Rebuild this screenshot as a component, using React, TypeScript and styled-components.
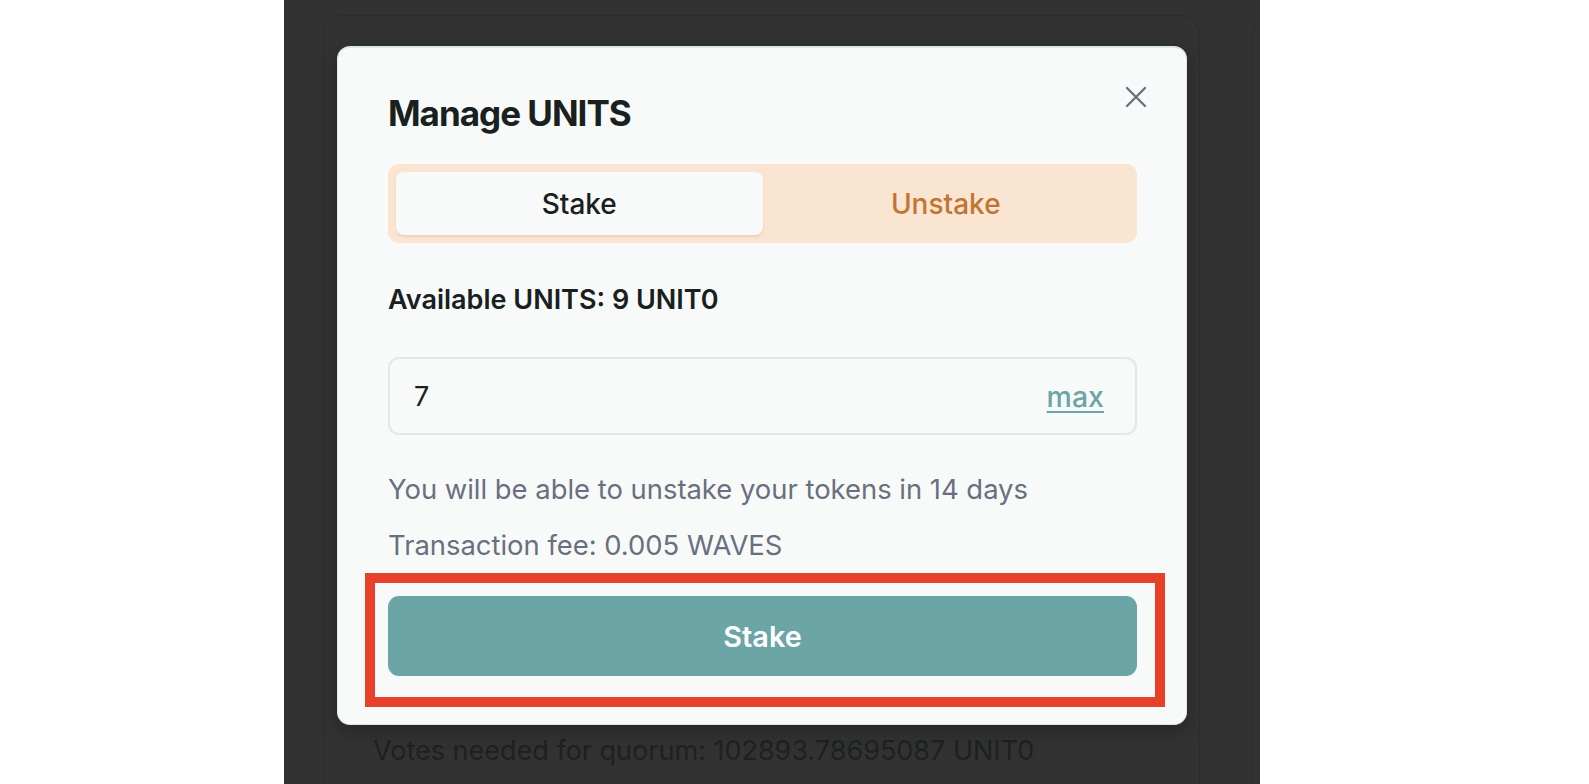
import React from "react";
import styled, { createGlobalStyle } from "styled-components";

const GlobalStyle = createGlobalStyle`
  html, body { margin: 0; padding: 0; background: #ffffff; }
  body { font-family: Inter, "Noto Sans", "Liberation Sans", sans-serif; }
  * { box-sizing: border-box; }
`;

const Screen = styled.div`
  width: 1589px;
  height: 784px;
  display: flex;
  padding-left: 284px;
  overflow: hidden;
`;

const Backdrop = styled.div`
  position: relative;
  width: 976px;
  height: 784px;
  background: #323232;
  display: flex;
  gap: 52px;
  padding: 15px 0 0 39px;
  overflow: hidden;
`;

const BgCard = styled.div<{ $w: number }>`
  flex: 0 0 ${(p) => p.$w}px;
  height: 820px;
  border: 1px solid #2c2c2c;
  border-radius: 20px;
  display: flex;
  flex-direction: column;
  justify-content: flex-end;
  padding: 0 0 66px 49px;
`;

const BgText = styled.div`
  font-size: 27px;
  color: #1c2222;
  line-height: 34px;
`;

const Modal = styled.div`
  position: absolute;
  left: 53px;
  top: 46px;
  width: 850px;
  height: 679px;
  background: #f8fafa;
  border: 1px solid #dbe8ea;
  border-top-width: 2px;
  border-radius: 13px;
  box-shadow: 0 6px 18px rgba(0, 0, 0, 0.25);
  padding: 43px 49px 0 50px;
  display: flex;
  flex-direction: column;
`;

const Close = styled.button`
  position: absolute;
  top: 38px;
  right: 39px;
  width: 22px;
  height: 22px;
  padding: 0;
  border: 0;
  background: transparent;
  color: #6b7280;
  display: flex;
  align-items: center;
  justify-content: center;
`;

const Title = styled.h2`
  margin: 0;
  font-size: 35px;
  line-height: 44px;
  font-weight: 700;
  letter-spacing: -1px;
  color: #182020;
`;

const Tabs = styled.div`
  margin-top: 29px;
  height: 79px;
  background: #fae5d2;
  border-radius: 11px;
  padding: 8px;
  display: grid;
  grid-template-columns: 1fr 1fr;
`;

const Tab = styled.div<{ $active?: boolean }>`
  display: flex;
  align-items: center;
  justify-content: center;
  border-radius: 8px;
  font-size: 28px;
  font-weight: 500;
  color: ${(p) => (p.$active ? "#182020" : "#c27433")};
  background: ${(p) => (p.$active ? "#f8fafa" : "transparent")};
  box-shadow: ${(p) => (p.$active ? "0 2px 2px rgba(200, 150, 110, 0.25)" : "none")};
`;

const Label = styled.div`
  margin-top: 41px;
  font-size: 27px;
  line-height: 32px;
  font-weight: 600;
  color: #182020;
`;

const InputBox = styled.div`
  margin-top: 41px;
  height: 78px;
  border: 2px solid #dde9ea;
  border-radius: 11px;
  display: flex;
  align-items: center;
  justify-content: space-between;
  padding: 0 31px 0 24px;
`;

const Value = styled.span`
  font-size: 27px;
  color: #182020;
`;

const Max = styled.span`
  font-size: 28.5px;
  font-weight: 500;
  color: #6ba5a5;
  text-decoration: underline;
  text-underline-offset: 4px;
  text-decoration-thickness: 2px;
`;

const Note = styled.p<{ $gap: number }>`
  margin: ${(p) => p.$gap}px 0 0;
  font-size: 27.4px;
  line-height: 32px;
  color: #687080;
`;

const ButtonWrap = styled.div`
  position: relative;
  margin-top: 35px;
`;

const Button = styled.button`
  width: 100%;
  height: 80px;
  border: 0;
  border-radius: 11px;
  background: #6ca5a5;
  color: #ffffff;
  font-family: inherit;
  font-size: 28.8px;
  font-weight: 600;
`;

const Highlight = styled.div`
  position: absolute;
  top: -23px;
  left: -23px;
  right: -28px;
  bottom: -31px;
  border: 10px solid #e8412a;
  pointer-events: none;
`;

export default function App() {
  return (
    <>
      <GlobalStyle />
      <Screen>
        <Backdrop>
          <BgCard $w={877}>
            <BgText>Votes needed for quorum: 102893.78695087 UNIT0</BgText>
          </BgCard>
          <BgCard $w={400} />
          <Modal>
            <Close aria-label="Close">
              <svg width="22" height="22" viewBox="0 0 22 22" fill="none">
                <path d="M2 2L20 20M20 2L2 20" stroke="currentColor" strokeWidth="2.4" strokeLinecap="round" />
              </svg>
            </Close>
            <Title>Manage UNITS</Title>
            <Tabs>
              <Tab $active>Stake</Tab>
              <Tab>Unstake</Tab>
            </Tabs>
            <Label>Available UNITS: 9 UNIT0</Label>
            <InputBox>
              <Value>7</Value>
              <Max>max</Max>
            </InputBox>
            <Note $gap={38}>You will be able to unstake your tokens in 14 days</Note>
            <Note $gap={24}>Transaction fee: 0.005 WAVES</Note>
            <ButtonWrap>
              <Button>Stake</Button>
              <Highlight />
            </ButtonWrap>
          </Modal>
        </Backdrop>
      </Screen>
    </>
  );
}
